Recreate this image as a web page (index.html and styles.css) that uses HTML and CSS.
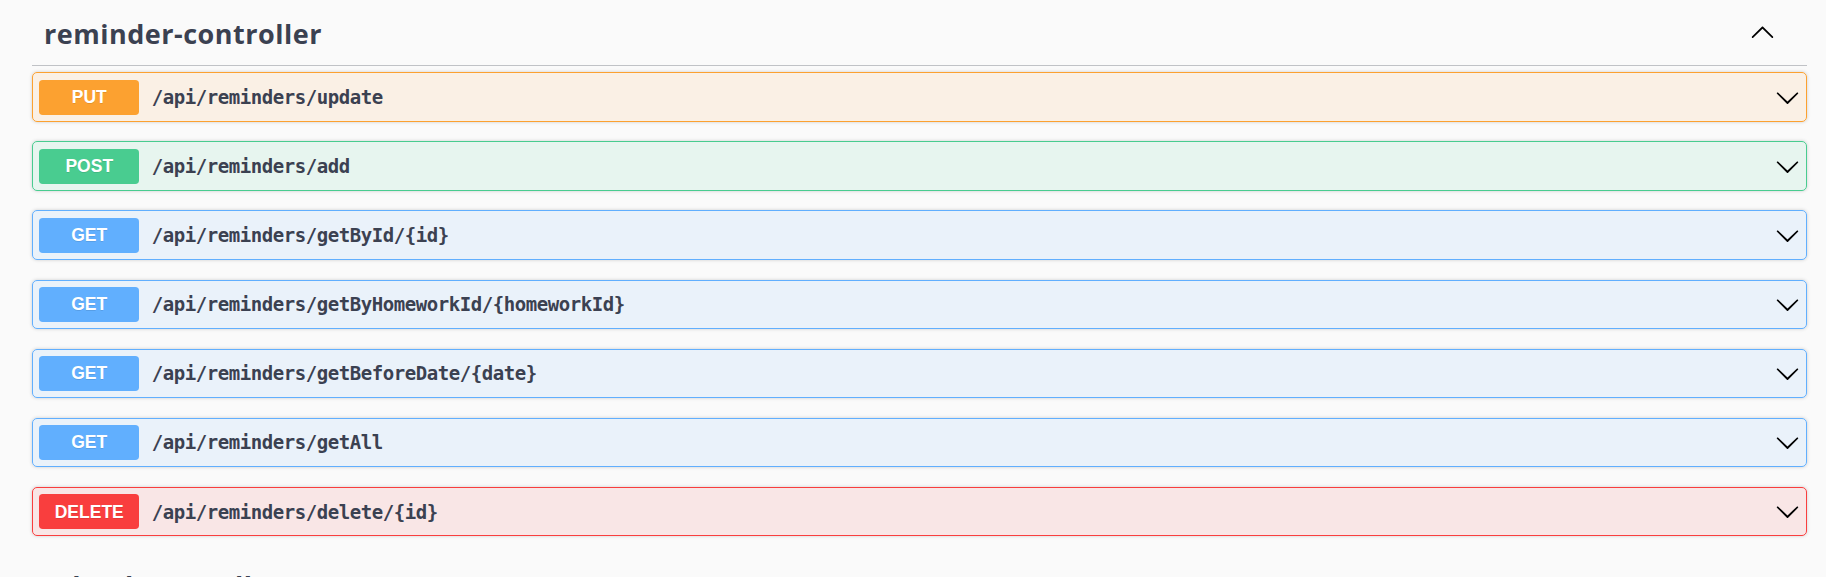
FILE: index.html
```html
<!DOCTYPE html>
<html lang="en">
<head>
<meta charset="utf-8">
<title>reminder-controller</title>
<link rel="stylesheet" href="styles.css">
</head>
<body>
<div class="wrapper">
  <section class="tag-section">
    <div class="tag">
      <h3 class="tag-title">reminder-controller</h3>
      <button class="tag-toggle" aria-label="collapse">
        <svg class="arrow" viewBox="0 0 20 20" width="25" height="25"><path d="M17.418 14.908c.272.268.709.268.979 0s.271-.701 0-.969l-7.908-7.83c-.27-.268-.707-.268-.979 0l-7.908 7.83c-.27.268-.27.701 0 .969.271.268.709.268.979 0L10 7.767l7.418 7.141z"/></svg>
      </button>
    </div>
    <div class="ops">
      <div class="opblock put">
        <div class="summary">
          <span class="method">PUT</span>
          <span class="path">/api/reminders/update</span>
          <svg class="arrow" viewBox="0 0 20 20" width="25" height="25"><path d="M17.418 6.109c.272-.268.709-.268.979 0s.271.701 0 .969l-7.908 7.83c-.27.268-.707.268-.979 0l-7.908-7.83c-.27-.268-.27-.701 0-.969.271-.268.709-.268.979 0L10 13.25l7.418-7.141z"/></svg>
        </div>
      </div>
      <div class="opblock post">
        <div class="summary">
          <span class="method">POST</span>
          <span class="path">/api/reminders/add</span>
          <svg class="arrow" viewBox="0 0 20 20" width="25" height="25"><path d="M17.418 6.109c.272-.268.709-.268.979 0s.271.701 0 .969l-7.908 7.83c-.27.268-.707.268-.979 0l-7.908-7.83c-.27-.268-.27-.701 0-.969.271-.268.709-.268.979 0L10 13.25l7.418-7.141z"/></svg>
        </div>
      </div>
      <div class="opblock get">
        <div class="summary">
          <span class="method">GET</span>
          <span class="path">/api/reminders/getById/{id}</span>
          <svg class="arrow" viewBox="0 0 20 20" width="25" height="25"><path d="M17.418 6.109c.272-.268.709-.268.979 0s.271.701 0 .969l-7.908 7.83c-.27.268-.707.268-.979 0l-7.908-7.83c-.27-.268-.27-.701 0-.969.271-.268.709-.268.979 0L10 13.25l7.418-7.141z"/></svg>
        </div>
      </div>
      <div class="opblock get">
        <div class="summary">
          <span class="method">GET</span>
          <span class="path">/api/reminders/getByHomeworkId/{homeworkId}</span>
          <svg class="arrow" viewBox="0 0 20 20" width="25" height="25"><path d="M17.418 6.109c.272-.268.709-.268.979 0s.271.701 0 .969l-7.908 7.83c-.27.268-.707.268-.979 0l-7.908-7.830c-.27-.268-.27-.701 0-.969.271-.268.709-.268.979 0L10 13.25l7.418-7.141z"/></svg>
        </div>
      </div>
      <div class="opblock get">
        <div class="summary">
          <span class="method">GET</span>
          <span class="path">/api/reminders/getBeforeDate/{date}</span>
          <svg class="arrow" viewBox="0 0 20 20" width="25" height="25"><path d="M17.418 6.109c.272-.268.709-.268.979 0s.271.701 0 .969l-7.908 7.83c-.27.268-.707.268-.979 0l-7.908-7.83c-.27-.268-.27-.701 0-.969.271-.268.709-.268.979 0L10 13.25l7.418-7.141z"/></svg>
        </div>
      </div>
      <div class="opblock get">
        <div class="summary">
          <span class="method">GET</span>
          <span class="path">/api/reminders/getAll</span>
          <svg class="arrow" viewBox="0 0 20 20" width="25" height="25"><path d="M17.418 6.109c.272-.268.709-.268.979 0s.271.701 0 .969l-7.908 7.83c-.27.268-.707.268-.979 0l-7.908-7.83c-.27-.268-.27-.701 0-.969.271-.268.709-.268.979 0L10 13.25l7.418-7.141z"/></svg>
        </div>
      </div>
      <div class="opblock delete">
        <div class="summary">
          <span class="method">DELETE</span>
          <span class="path">/api/reminders/delete/{id}</span>
          <svg class="arrow" viewBox="0 0 20 20" width="25" height="25"><path d="M17.418 6.109c.272-.268.709-.268.979 0s.271.701 0 .969l-7.908 7.83c-.27.268-.707.268-.979 0l-7.908-7.83c-.27-.268-.27-.701 0-.969.271-.268.709-.268.979 0L10 13.25l7.418-7.141z"/></svg>
        </div>
      </div>
    </div>
  </section>
  <section class="tag-section">
    <div class="tag">
      <h3 class="tag-title">school-controller</h3>
      <button class="tag-toggle" aria-label="collapse">
        <svg class="arrow" viewBox="0 0 20 20" width="25" height="25"><path d="M17.418 14.908c.272.268.709.268.979 0s.271-.701 0-.969l-7.908-7.83c-.27-.268-.707-.268-.979 0l-7.908 7.83c-.27.268-.27.701 0 .969.271.268.709.268.979 0L10 7.767l7.418 7.141z"/></svg>
      </button>
    </div>
  </section>
</div>
</body>
</html>
```

FILE: styles.css
```css
html, body {
  margin: 0;
  padding: 0;
  background: #fafafa;
}

.wrapper {
  padding: 0 19px 0 32px;
}

.tag {
  display: flex;
  align-items: center;
  padding: 14px 32px 11px 12px;
  border-bottom: 1px solid rgba(59, 65, 81, 0.3);
  margin-bottom: 6.25px;
}

.tag-title {
  flex: 1;
  margin: 0;
  font-family: "Open Sans", "Noto Sans", sans-serif;
  font-weight: 700;
  font-size: 27px;
  letter-spacing: 0.5px;
  line-height: 40px;
  color: #3b4151;
}

.tag-toggle {
  display: flex;
  padding: 0;
  margin: 0 0 6px 0;
  border: 0;
  background: none;
  cursor: pointer;
}

.arrow {
  display: block;
  width: 25px;
  height: 25px;
  flex: none;
  fill: #000;
}

.opblock {
  border: 1px solid #000;
  border-radius: 5px;
  box-shadow: 0 0 3.75px rgba(0, 0, 0, 0.19);
  margin-bottom: 19.6px;
}

.opblock:last-child {
  margin-bottom: 16px;
}

.summary {
  display: flex;
  align-items: center;
  padding: 6.25px;
  cursor: pointer;
}

.method {
  min-width: 100px;
  padding: 7.5px 0;
  line-height: 20px;
  border-radius: 3.75px;
  text-align: center;
  color: #fff;
  font-family: "Liberation Sans", Arial, sans-serif;
  font-weight: 700;
  font-size: 17.5px;
  text-shadow: 0 1px 0 rgba(0, 0, 0, 0.1);
}

.path {
  flex: 1;
  padding: 0 12.5px;
  font-family: "DejaVu Sans Mono", "Liberation Mono", monospace;
  font-weight: 700;
  font-size: 19px;
  letter-spacing: -0.44px;
  color: #3b4151;
}

.put { background: rgba(252, 161, 48, 0.1); border-color: #fca130; }
.put .method { background: #fca130; }

.post { background: rgba(73, 204, 144, 0.1); border-color: #49cc90; }
.post .method { background: #49cc90; }

.get { background: rgba(97, 175, 254, 0.1); border-color: #61affe; }
.get .method { background: #61affe; }

.delete { background: rgba(249, 62, 62, 0.1); border-color: #f93e3e; }
.delete .method { background: #f93e3e; }
```
